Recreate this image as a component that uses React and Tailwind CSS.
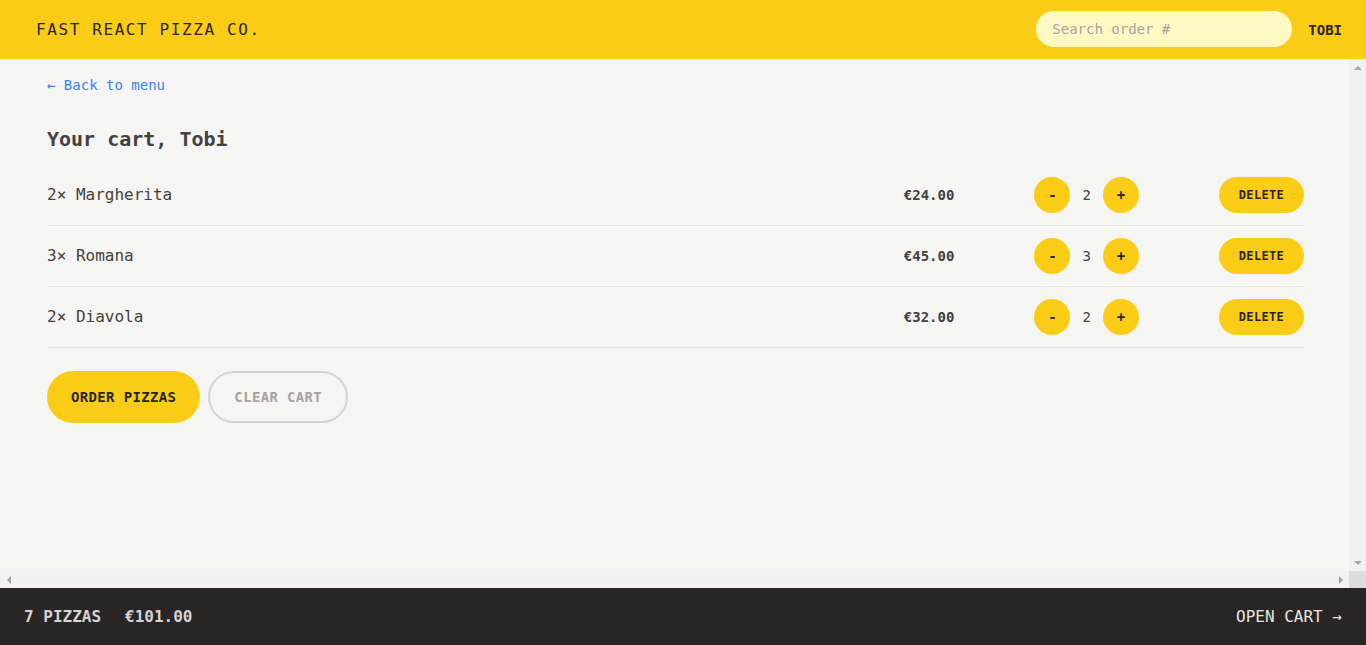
import React from 'react';

const items = [
  { id: 1, name: 'Margherita', qty: 2, price: 24 },
  { id: 2, name: 'Romana', qty: 3, price: 45 },
  { id: 3, name: 'Diavola', qty: 2, price: 32 },
];

const fmt = (n) => `€${n.toFixed(2)}`;

// Header with logo, search and username
function Header() {
  return (
    <header className="flex h-[59px] items-center justify-between bg-[#facc15] pl-9 pr-6 uppercase">
      <a href="#" className="text-base tracking-widest text-[#292524]">Fast React Pizza Co.</a>
      <div className="flex items-center gap-4">
        <input
          placeholder="Search order #"
          className="-mt-px h-9 w-64 rounded-full bg-[#fef9c3] px-4 text-sm text-[#44403c] placeholder:text-[#a8a29e] focus:outline-none"
        />
        <span className="text-sm font-semibold text-[#292524]">Tobi</span>
      </div>
    </header>
  );
}

function RoundButton({ children }) {
  return (
    <button className="flex h-9 w-9 items-center justify-center rounded-full bg-[#facc15] text-sm font-semibold text-[#292524]">
      {children}
    </button>
  );
}

function CartItem({ item }) {
  return (
    <li className="flex items-center justify-between py-3">
      <p className="text-base">{item.qty}&times; {item.name}</p>
      <div className="flex items-center gap-20">
        <p className="text-sm font-bold">{fmt(item.price)}</p>
        <div className="flex items-center gap-3">
          <RoundButton>-</RoundButton>
          <span className="text-sm font-medium">{item.qty}</span>
          <RoundButton>+</RoundButton>
        </div>
        <button className="h-9 rounded-full bg-[#facc15] px-5 text-xs font-semibold uppercase tracking-wide text-[#292524]">
          Delete
        </button>
      </div>
    </li>
  );
}

function Cart() {
  return (
    <div className="pb-4 pl-[47px] pr-[45px] pt-3.5">
      <a href="#" className="text-sm text-[#3b82f6]">&larr; Back to menu</a>
      <h2 className="mt-7 text-xl font-semibold">Your cart, Tobi</h2>
      <ul className="mt-3 divide-y divide-[#e7e5e4] border-b border-[#e7e5e4]">
        {items.map((it) => (
          <CartItem key={it.id} item={it} />
        ))}
      </ul>
      <div className="mt-[23px] flex gap-2">
        <button className="rounded-full bg-[#facc15] px-6 py-4 text-sm font-semibold uppercase tracking-wide text-[#292524]">
          Order pizzas
        </button>
        <button className="rounded-full border-2 border-[#d6d3d1] px-6 py-3.5 text-sm font-semibold uppercase tracking-wide text-[#a8a29e]">
          Clear cart
        </button>
      </div>
    </div>
  );
}

// small scrollbar arrow triangles
function Arrow({ dir }) {
  const pts = {
    up: '0,4 4,0 8,4',
    down: '0,0 8,0 4,4',
    left: '4,0 4,8 0,4',
    right: '0,0 4,4 0,8',
  }[dir];
  const vertical = dir === 'up' || dir === 'down';
  return (
    <div className="flex h-[17px] w-[17px] items-center justify-center">
      <svg width={vertical ? 8 : 4} height={vertical ? 4 : 8} viewBox={vertical ? '0 0 8 4' : '0 0 4 8'}>
        <polygon points={pts} fill="#a3a3a3" />
      </svg>
    </div>
  );
}

function CartOverview() {
  return (
    <footer className="flex h-[57px] items-center justify-between bg-[#292524] px-6 text-base uppercase text-[#e7e5e4]">
      <p className="flex gap-6 font-semibold text-[#d6d3d1]">
        <span>7 pizzas</span>
        <span>€101.00</span>
      </p>
      <a href="#">Open cart &rarr;</a>
    </footer>
  );
}

export default function App() {
  return (
    <div
      className="grid h-screen grid-rows-[auto_1fr_auto] text-[#44403c]"
      style={{ fontFamily: '"DejaVu Sans Mono", "Liberation Mono", monospace' }}
    >
      <Header />
      <div className="grid min-h-0 grid-cols-[1fr_17px] grid-rows-[1fr_17px] bg-[#f5f5f4]">
        <main className="overflow-hidden">
          <Cart />
        </main>
        <div className="flex flex-col justify-between bg-[#f1f1f1]">
          <Arrow dir="up" />
          <Arrow dir="down" />
        </div>
        <div className="flex justify-between bg-[#f1f1f1]">
          <Arrow dir="left" />
          <Arrow dir="right" />
        </div>
        <div className="bg-[#dcdcdc]" />
      </div>
      <CartOverview />
    </div>
  );
}
